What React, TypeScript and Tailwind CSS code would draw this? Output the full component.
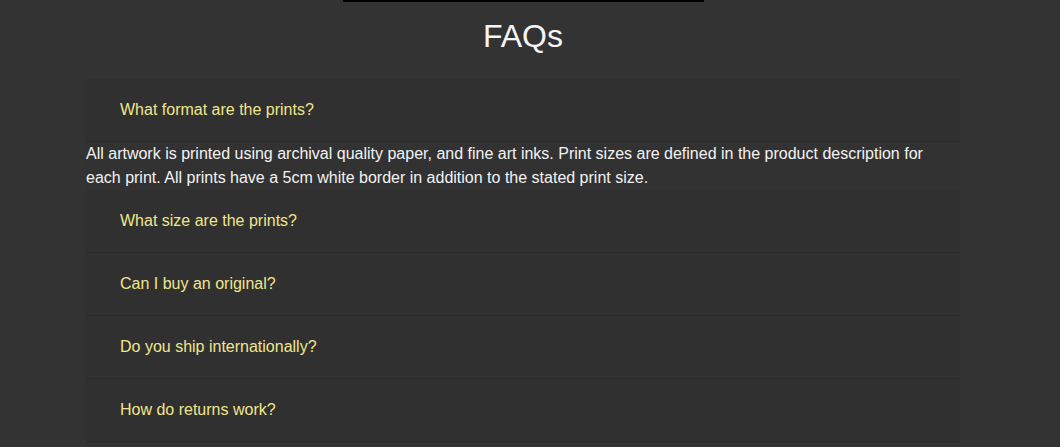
import React from "react";

const items = [
  {
    q: "What format are the prints?",
    a: "All artwork is printed using archival quality paper, and fine art inks. Print sizes are defined in the product description for each print. All prints have a 5cm white border in addition to the stated print size.",
  },
  { q: "What size are the prints?" },
  { q: "Can I buy an original?" },
  { q: "Do you ship internationally?" },
  { q: "How do returns work?" },
];

export default function App() {
  return (
    <div
      className="w-full min-h-[447px] bg-[#333333]"
      style={{ fontFamily: '"Liberation Sans", Arial, sans-serif' }}
    >
      <div className="w-[1046px] flex flex-col items-center">
        <div className="w-[361px] h-[2px] bg-black" />
        <h1 className="mt-[16px] mb-[24px] text-[32px] leading-[37px] text-[#f5f5f5] font-normal">
          FAQs
        </h1>
        <div className="w-[874px] flex flex-col">
          {items.map((it) => (
            <div key={it.q}>
              <div className="bg-[#303030] border-b border-[#2a2a2a] pl-[34px] py-[20px] text-[16px] leading-[22px] text-[#f0e68c]">
                {it.q}
              </div>
              {it.a && (
                <div className="bg-[#323232] text-[16px] leading-[24px] text-[#f2f2f2]">
                  {it.a}
                </div>
              )}
            </div>
          ))}
        </div>
      </div>
    </div>
  );
}
